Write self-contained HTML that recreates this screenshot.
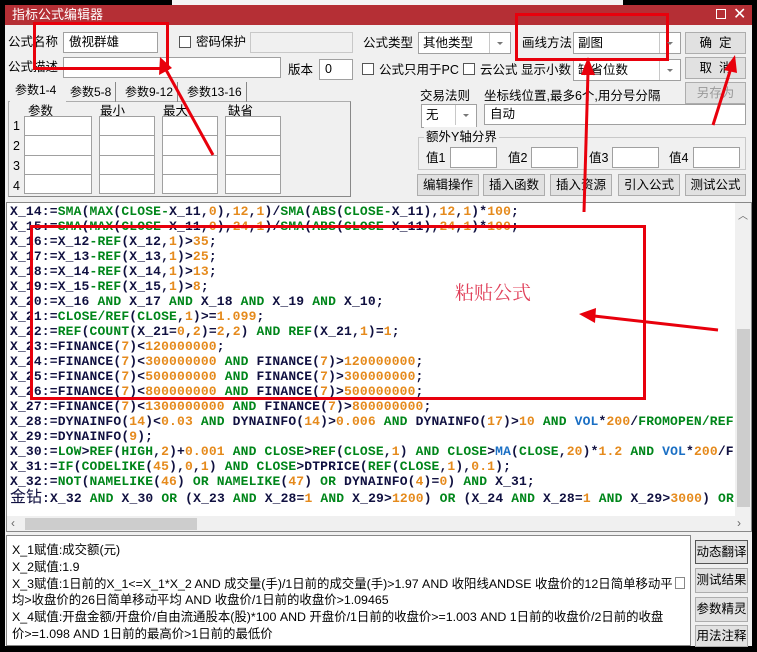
<!DOCTYPE html>
<html><head><meta charset="utf-8">
<style>
*{box-sizing:border-box;margin:0;padding:0}
body{width:757px;height:652px;background:#000;position:relative;overflow:hidden;font-family:"Liberation Sans","Noto Sans CJK SC",sans-serif;font-size:12px;color:#000}
.a{position:absolute}
.win{left:5px;top:5px;width:747px;height:641px;background:#f0f0f0}
.title{left:5px;top:5px;width:747px;height:20px;background:#b52f35;color:#fff;font-size:13px;line-height:20px;padding-left:7px}
.lbl{position:absolute;font-size:12.5px;line-height:20px;white-space:nowrap}
.in{position:absolute;background:#fff;border:1px solid #a0a0a0;height:21px;font-size:12.5px;line-height:19px;padding-left:5px}
.sel{position:absolute;background:#fff;border:1px solid #a0a0a0;height:22px;font-size:12.5px;line-height:20px;padding-left:4px}
.sel:after{content:"";position:absolute;right:0;top:0;width:20px;height:20px;border-left:1px solid #c8c8c8;background:#fff}
.sel i{position:absolute;right:7px;top:9px;border-left:3px solid transparent;border-right:3px solid transparent;border-top:3px solid #777;z-index:2}
.cb{position:absolute;width:12px;height:12px;border:1px solid #555;background:#fff}
.btn{position:absolute;background:#e1e1e1;border:1px solid #adadad;font-size:12.5px;text-align:center;line-height:20px;height:22px}
.code{left:6px;top:202px;width:746px;height:330px;background:#fff;border:1px solid #888;overflow:hidden}
.ln{position:absolute;left:3px;font-family:"Liberation Mono",monospace;font-weight:bold;font-size:13px;letter-spacing:0.15px;line-height:15px;white-space:pre;color:#101040}
.g{color:#00861a}.o{color:#e58a1c}.b{color:#1a6fc4}
.red{position:absolute;border:3px solid #e8000c}
</style></head><body>
<div class="a" style="left:172px;top:0;width:451px;height:5px;background:#f4f4f4"></div>
<div class="a win"></div>
<div class="a title">指标公式编辑器</div>
<div class="a" style="left:716px;top:9px;width:10px;height:10px;border:1px solid #fff"></div>
<div class="a" style="left:733px;top:4px;color:#fff;font-size:16px">✕</div>

<div class="lbl" style="left:8px;top:32px">公式名称</div>
<div class="in" style="left:63px;top:32px;width:95px">傲视群雄</div>
<div class="cb" style="left:179px;top:36px"></div>
<div class="lbl" style="left:196px;top:32px">密码保护</div>
<div class="in" style="left:250px;top:32px;width:103px;background:#f0f0f0;border-color:#c8c8c8"></div>
<div class="lbl" style="left:363px;top:33px">公式类型</div>
<div class="sel" style="left:418px;top:32px;width:93px">其他类型<i></i></div>
<div class="lbl" style="left:522px;top:33px">画线方法</div>
<div class="sel" style="left:573px;top:32px;width:108px">副图<i></i></div>
<div class="btn" style="left:685px;top:32px;width:61px">确&nbsp;&nbsp;定</div>

<div class="lbl" style="left:8px;top:57px">公式描述</div>
<div class="in" style="left:63px;top:57px;width:218px"></div>
<div class="lbl" style="left:288px;top:60px">版本</div>
<div class="in" style="left:319px;top:59px;width:34px">0</div>
<div class="cb" style="left:362px;top:63px"></div>
<div class="lbl" style="left:379px;top:60px">公式只用于PC</div>
<div class="cb" style="left:463px;top:63px"></div>
<div class="lbl" style="left:480px;top:60px">云公式&nbsp;显示小数</div>
<div class="sel" style="left:573px;top:59px;width:108px">缺省位数<i></i></div>
<div class="btn" style="left:685px;top:57px;width:61px">取&nbsp;&nbsp;消</div>

<div class="a" style="left:8px;top:101px;width:343px;height:96px;border:1px solid #adadad;border-right-color:#888;border-bottom-color:#888;background:#f0f0f0"></div>
<div class="lbl" style="left:10px;top:80px;width:56px;height:22px;background:#f0f0f0;padding-left:5px;font-size:12px">参数1-4</div>
<div class="lbl" style="left:66px;top:82px;font-size:12px;border-right:1px solid #888;padding:0 4px">参数5-8</div>
<div class="lbl" style="left:121px;top:82px;font-size:12px;border-right:1px solid #888;padding:0 4px">参数9-12</div>
<div class="lbl" style="left:183px;top:82px;font-size:12px;border-right:1px solid #888;padding:0 4px">参数13-16</div>
<div class="lbl" style="left:28px;top:101px">参数</div>
<div class="lbl" style="left:100px;top:101px">最小</div>
<div class="lbl" style="left:163px;top:101px">最大</div>
<div class="lbl" style="left:228px;top:101px">缺省</div>
<div class="lbl" style="left:13px;top:116px">1</div><div class="lbl" style="left:13px;top:136px">2</div><div class="lbl" style="left:13px;top:156px">3</div><div class="lbl" style="left:13px;top:176px">4</div>

<div class="lbl" style="left:420px;top:86px">交易法则</div>
<div class="lbl" style="left:484px;top:86px">坐标线位置,最多6个,用分号分隔</div>
<div class="btn" style="left:685px;top:82px;width:61px;color:#999">另存为</div>
<div class="sel" style="left:421px;top:104px;width:56px;height:24px">无<i></i></div>
<div class="in" style="left:484px;top:104px;width:262px">自动</div>
<div class="a" style="left:418px;top:137px;width:328px;height:33px;border:1px solid #c8c8c8"></div>
<div class="lbl" style="left:424px;top:127px;background:#f0f0f0;padding:0 2px">额外Y轴分界</div>
<div class="lbl" style="left:426px;top:148px">值1</div><div class="in" style="left:450px;top:147px;width:47px"></div>
<div class="lbl" style="left:508px;top:148px">值2</div><div class="in" style="left:531px;top:147px;width:47px"></div>
<div class="lbl" style="left:589px;top:148px">值3</div><div class="in" style="left:612px;top:147px;width:47px"></div>
<div class="lbl" style="left:669px;top:148px">值4</div><div class="in" style="left:693px;top:147px;width:47px"></div>
<div class="btn" style="left:417px;top:174px;width:62px">编辑操作</div>
<div class="btn" style="left:483px;top:174px;width:62px">插入函数</div>
<div class="btn" style="left:550px;top:174px;width:62px">插入资源</div>
<div class="btn" style="left:618px;top:174px;width:62px">引入公式</div>
<div class="btn" style="left:685px;top:174px;width:61px">测试公式</div>

<div class="a code">
<div class="ln" style="top:1px">X_14:=<span class="g">SMA</span>(<span class="g">MAX</span>(<span class="g">CLOSE-</span>X_11,<span class="o">0</span>),<span class="o">12</span>,<span class="o">1</span>)/<span class="g">SMA</span>(<span class="g">ABS</span>(<span class="g">CLOSE-</span>X_11),<span class="o">12</span>,<span class="o">1</span>)*<span class="o">100</span>;</div>
<div class="ln" style="top:16px">X_15:=<span class="g">SMA</span>(<span class="g">MAX</span>(<span class="g">CLOSE-</span>X_11,<span class="o">0</span>),<span class="o">24</span>,<span class="o">1</span>)/<span class="g">SMA</span>(<span class="g">ABS</span>(<span class="g">CLOSE-</span>X_11),<span class="o">24</span>,<span class="o">1</span>)*<span class="o">100</span>;</div>
<div class="ln" style="top:31px">X_16:=X_12<span class="g">-REF</span>(X_12,<span class="o">1</span>)&gt;<span class="o">35</span>;</div>
<div class="ln" style="top:46px">X_17:=X_13<span class="g">-REF</span>(X_13,<span class="o">1</span>)&gt;<span class="o">25</span>;</div>
<div class="ln" style="top:61px">X_18:=X_14<span class="g">-REF</span>(X_14,<span class="o">1</span>)&gt;<span class="o">13</span>;</div>
<div class="ln" style="top:76px">X_19:=X_15<span class="g">-REF</span>(X_15,<span class="o">1</span>)&gt;<span class="o">8</span>;</div>
<div class="ln" style="top:91px">X_20:=X_16 <span class="g">AND</span> X_17 <span class="g">AND</span> X_18 <span class="g">AND</span> X_19 <span class="g">AND</span> X_10;</div>
<div class="ln" style="top:106px">X_21:=<span class="g">CLOSE/REF</span>(<span class="g">CLOSE</span>,<span class="o">1</span>)&gt;=<span class="o">1.099</span>;</div>
<div class="ln" style="top:121px">X_22:=<span class="g">REF</span>(<span class="g">COUNT</span>(X_21=<span class="o">0</span>,<span class="o">2</span>)=<span class="o">2</span>,<span class="o">2</span>) <span class="g">AND</span> <span class="g">REF</span>(X_21,<span class="o">1</span>)=<span class="o">1</span>;</div>
<div class="ln" style="top:136px">X_23:=FINANCE(<span class="o">7</span>)&lt;<span class="o">120000000</span>;</div>
<div class="ln" style="top:151px">X_24:=FINANCE(<span class="o">7</span>)&lt;<span class="o">300000000</span> <span class="g">AND</span> FINANCE(<span class="o">7</span>)&gt;<span class="o">120000000</span>;</div>
<div class="ln" style="top:166px">X_25:=FINANCE(<span class="o">7</span>)&lt;<span class="o">500000000</span> <span class="g">AND</span> FINANCE(<span class="o">7</span>)&gt;<span class="o">300000000</span>;</div>
<div class="ln" style="top:181px">X_26:=FINANCE(<span class="o">7</span>)&lt;<span class="o">800000000</span> <span class="g">AND</span> FINANCE(<span class="o">7</span>)&gt;<span class="o">500000000</span>;</div>
<div class="ln" style="top:196px">X_27:=FINANCE(<span class="o">7</span>)&lt;<span class="o">1300000000</span> <span class="g">AND</span> FINANCE(<span class="o">7</span>)&gt;<span class="o">800000000</span>;</div>
<div class="ln" style="top:211px">X_28:=DYNAINFO(<span class="o">14</span>)&lt;<span class="o">0.03</span> <span class="g">AND</span> DYNAINFO(<span class="o">14</span>)&gt;<span class="o">0.006</span> <span class="g">AND</span> DYNAINFO(<span class="o">17</span>)&gt;<span class="o">10</span> <span class="g">AND</span> <span class="b">VOL</span>*<span class="o">200</span>/<span class="g">FROMOPEN/REF</span></div>
<div class="ln" style="top:226px">X_29:=DYNAINFO(<span class="o">9</span>);</div>
<div class="ln" style="top:241px">X_30:=<span class="g">LOW</span>&gt;<span class="g">REF</span>(<span class="g">HIGH</span>,<span class="o">2</span>)+<span class="o">0.001</span> <span class="g">AND</span> <span class="g">CLOSE</span>&gt;<span class="g">REF</span>(<span class="g">CLOSE</span>,<span class="o">1</span>) <span class="g">AND</span> <span class="g">CLOSE</span>&gt;<span class="b">MA</span>(<span class="g">CLOSE</span>,<span class="o">20</span>)*<span class="o">1.2</span> <span class="g">AND</span> <span class="b">VOL</span>*<span class="o">200</span>/F</div>
<div class="ln" style="top:256px">X_31:=<span class="g">IF</span>(<span class="g">CODELIKE</span>(<span class="o">45</span>),<span class="o">0</span>,<span class="o">1</span>) <span class="g">AND</span> <span class="g">CLOSE</span>&gt;DTPRICE(<span class="g">REF</span>(<span class="g">CLOSE</span>,<span class="o">1</span>),<span class="o">0.1</span>);</div>
<div class="ln" style="top:271px">X_32:=<span class="g">NOT</span>(<span class="g">NAMELIKE</span>(<span class="o">46</span>) <span class="g">OR</span> <span class="g">NAMELIKE</span>(<span class="o">47</span>) <span class="g">OR</span> DYNAINFO(<span class="o">4</span>)=<span class="o">0</span>) <span class="g">AND</span> X_31;</div>
<div class="ln" style="top:285px"><span style="font-family:'Noto Sans CJK SC',sans-serif;font-weight:normal;font-size:16px;letter-spacing:0">金钻</span>:X_32 <span class="g">AND</span> X_30 <span class="g">OR</span> (X_23 <span class="g">AND</span> X_28=<span class="o">1</span> <span class="g">AND</span> X_29&gt;<span class="o">1200</span>) <span class="g">OR</span> (X_24 <span class="g">AND</span> X_28=<span class="o">1</span> <span class="g">AND</span> X_29&gt;<span class="o">3000</span>) <span class="g">OR</span></div>
<div class="a" style="left:728px;top:0;width:17px;height:314px;background:#f0f0f0"></div>
<div class="a" style="left:730px;top:126px;width:13px;height:178px;background:#cdcdcd"></div>
<div class="a" style="left:731px;top:4px;font-size:10px;color:#666">︿</div>
<div class="a" style="left:0;top:313px;width:745px;height:16px;background:#f0f0f0"></div>
<div class="a" style="left:18px;top:315px;width:172px;height:12px;background:#cdcdcd"></div>
<div class="a" style="left:4px;top:313px;font-size:12px;color:#666">‹</div>
<div class="a" style="left:730px;top:313px;font-size:12px;color:#666">›</div>
</div>

<div class="a" style="left:6px;top:535px;width:685px;height:111px;background:#fff;border:1px solid #888;font-size:12.4px;line-height:16.8px;padding:6px 0 0 5px;white-space:nowrap">
X_1赋值:成交额(元)<br>X_2赋值:1.9<br>X_3赋值:1日前的X_1&lt;=X_1*X_2 AND 成交量(手)/1日前的成交量(手)&gt;1.97 AND 收阳线ANDSE 收盘价的12日简单移动平<br>均&gt;收盘价的26日简单移动平均 AND 收盘价/1日前的收盘价&gt;1.09465<br>X_4赋值:开盘金额/开盘价/自由流通股本(股)*100 AND 开盘价/1日前的收盘价&gt;=1.003 AND 1日前的收盘价/2日前的收盘<br>价&gt;=1.098 AND 1日前的最高价&gt;1日前的最低价</div>
<div class="a" style="left:675px;top:577px;width:10px;height:12px;border:1px solid #888"></div>
<div class="btn" style="left:695px;top:540px;width:53px;height:24px;line-height:22px;border-color:#555">动态翻译</div>
<div class="btn" style="left:695px;top:568px;width:53px;height:25px;line-height:23px">测试结果</div>
<div class="btn" style="left:695px;top:597px;width:53px;height:25px;line-height:23px">参数精灵</div>
<div class="btn" style="left:695px;top:625px;width:53px;height:22px">用法注释</div>

<div class="a" style="left:24px;top:116px;width:68px;height:78px;background:#fff;border:1px solid #a0a0a0"></div>
<div class="a" style="left:99px;top:116px;width:56px;height:78px;background:#fff;border:1px solid #a0a0a0"></div>
<div class="a" style="left:162px;top:116px;width:56px;height:78px;background:#fff;border:1px solid #a0a0a0"></div>
<div class="a" style="left:225px;top:116px;width:56px;height:78px;background:#fff;border:1px solid #a0a0a0"></div>
<div class="a" style="left:24px;top:135px;width:257px;height:1px;background:#a0a0a0"></div>
<div class="a" style="left:24px;top:155px;width:257px;height:1px;background:#a0a0a0"></div>
<div class="a" style="left:24px;top:174px;width:257px;height:1px;background:#a0a0a0"></div>
<div class="a" style="left:92px;top:116px;width:7px;height:78px;background:#f0f0f0"></div>
<div class="a" style="left:155px;top:116px;width:7px;height:78px;background:#f0f0f0"></div>
<div class="a" style="left:218px;top:116px;width:7px;height:78px;background:#f0f0f0"></div>

<div class="red" style="left:33px;top:22px;width:136px;height:48px"></div>
<div class="red" style="left:515px;top:13px;width:154px;height:48px"></div>
<div class="red" style="left:30px;top:225px;width:616px;height:175px"></div>
<div class="a" style="left:455px;top:278px;color:#e0405a;font-size:19px;font-family:'Noto Serif CJK SC',serif">粘贴公式</div>
<svg class="a" style="left:0;top:0" width="757" height="652">
<g stroke="#e8000c" stroke-width="3" fill="#e8000c">
<line x1="213" y1="155" x2="165" y2="68"/><polygon points="160,57 159,75 172,68" stroke="none"/>
<line x1="584" y1="212" x2="588" y2="72"/><polygon points="588,57 581,75 595,75" stroke="none"/>
<line x1="713" y1="125" x2="731" y2="68"/><polygon points="735,55 724,70 737,73" stroke="none"/>
<line x1="718" y1="330" x2="594" y2="316"/><polygon points="579,314 596,308 595,323" stroke="none"/>
</g></svg>
</body></html>
